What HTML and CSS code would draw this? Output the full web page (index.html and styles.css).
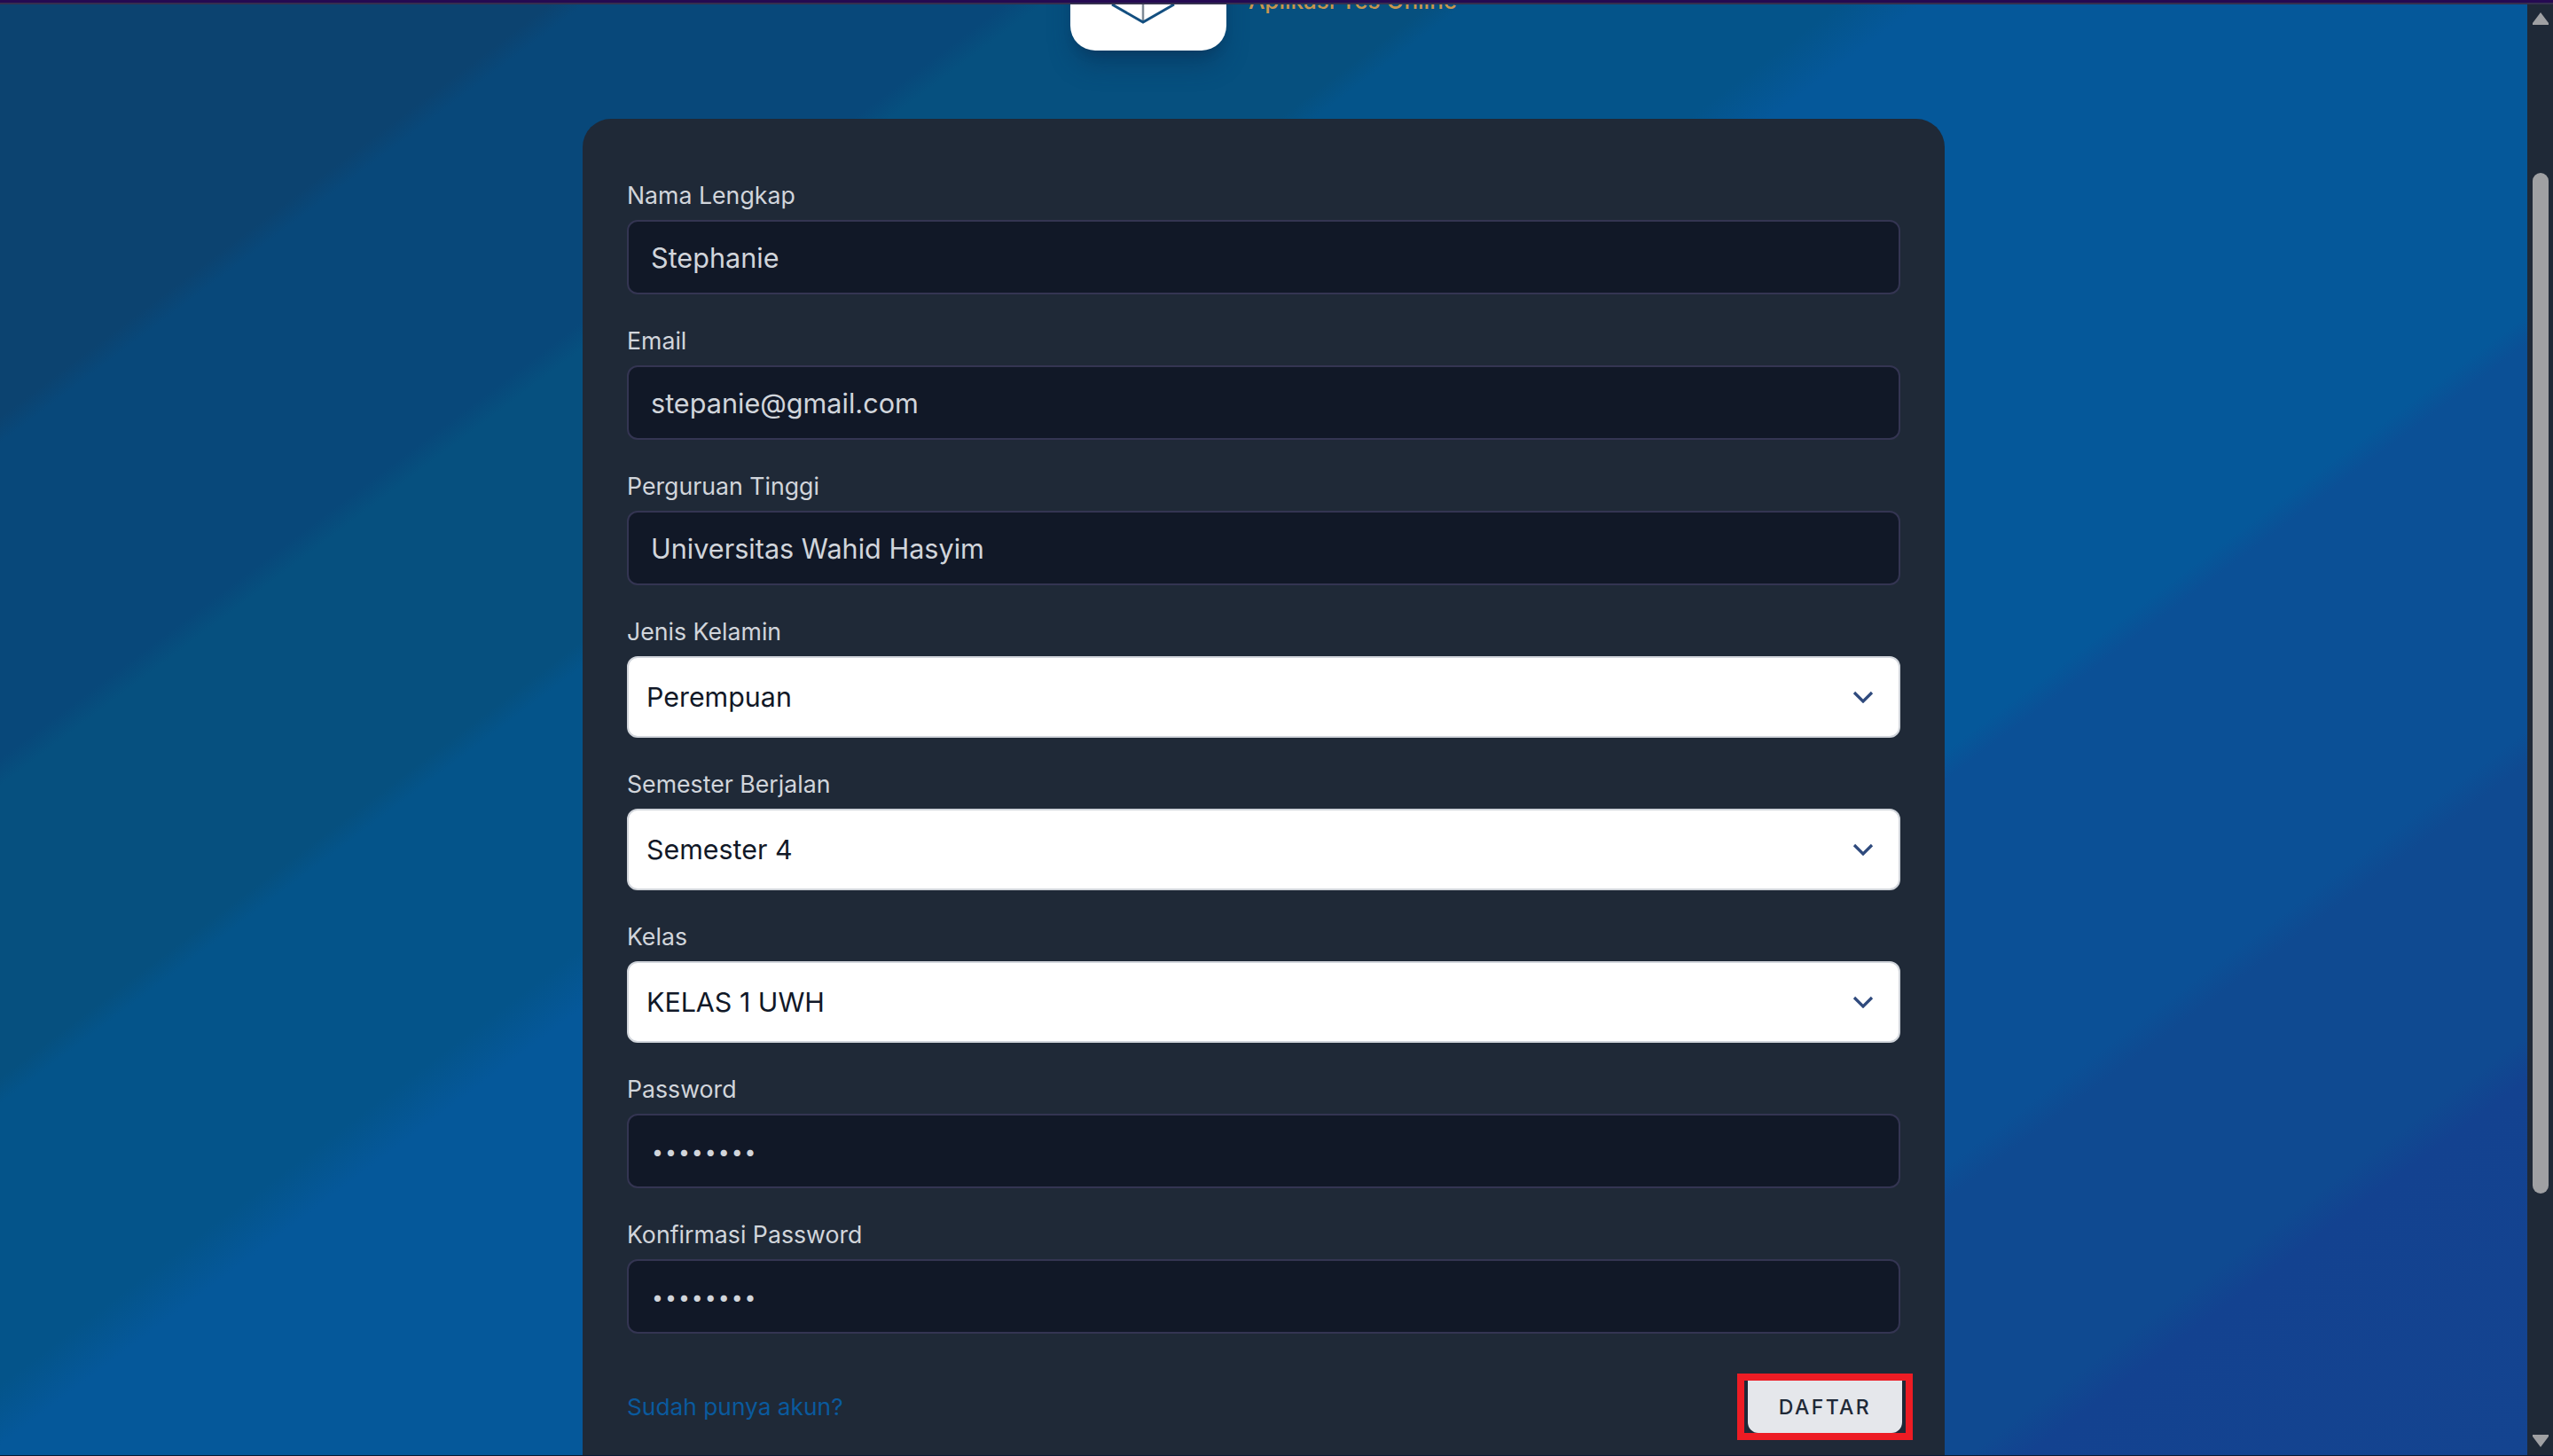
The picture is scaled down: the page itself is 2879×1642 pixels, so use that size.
FILE: index.html
```html
<!DOCTYPE html>
<html lang="id">
<head>
<meta charset="utf-8">
<title>Aplikasi Tes Online</title>
<link rel="stylesheet" href="styles.css">
</head>
<body>
<div class="topbar"></div>
<div class="window">
  <main class="main">
    <header class="brand">
      <div class="logo">
        <svg class="logo-icon" viewBox="0 0 176 176" width="176" height="176">
          <path class="logo-stem" d="M82 90 L82 144"/>
          <path class="logo-line" d="M47 124 L82 144 L117 124"/>
        </svg>
      </div>
      <div class="brand-name">Aplikasi Tes Online</div>
    </header>
    <form class="card">
      <div class="field"><label class="label">Nama Lengkap</label><div class="input">Stephanie</div></div>
      <div class="field"><label class="label">Email</label><div class="input">stepanie@gmail.com</div></div>
      <div class="field"><label class="label">Perguruan Tinggi</label><div class="input">Universitas Wahid Hasyim</div></div>
      <div class="field"><label class="label">Jenis Kelamin</label>
        <div class="select"><span>Perempuan</span>
          <svg class="chevron" viewBox="0 0 24 14" width="24" height="14"><path d="M2 2 L12 12 L22 2"/></svg></div></div>
      <div class="field"><label class="label">Semester Berjalan</label>
        <div class="select"><span>Semester 4</span>
          <svg class="chevron" viewBox="0 0 24 14" width="24" height="14"><path d="M2 2 L12 12 L22 2"/></svg></div></div>
      <div class="field"><label class="label">Kelas</label>
        <div class="select"><span>KELAS 1 UWH</span>
          <svg class="chevron" viewBox="0 0 24 14" width="24" height="14"><path d="M2 2 L12 12 L22 2"/></svg></div></div>
      <div class="field"><label class="label">Password</label><div class="input input-pass"><span class="dots">••••••••</span></div></div>
      <div class="field"><label class="label">Konfirmasi Password</label><div class="input input-pass"><span class="dots">••••••••</span></div></div>
      <div class="actions">
        <a class="link">Sudah punya akun?</a>
        <div class="highlight"><button class="button" type="button">DAFTAR</button></div>
      </div>
    </form>
  </main>
  <aside class="scrollbar">
    <svg class="arrow" viewBox="0 0 18 14" width="18" height="14"><path d="M9 0 L18 12 L18 14 L0 14 L0 12 Z"/></svg>
    <div class="thumb"></div>
    <svg class="arrow arrow-down" viewBox="0 0 18 14" width="18" height="14"><path d="M0 0 L18 0 L18 2 L9 14 L0 2 Z"/></svg>
  </aside>
</div>
<div class="bottomline"></div>
</body>
</html>
```
FILE: styles.css
```css
* { box-sizing: border-box; }
html, body { margin: 0; height: 100%; overflow: hidden; }
body {
  display: flex;
  flex-direction: column;
  font-family: Inter, "Noto Sans", sans-serif;
  background: #1f2937;
}
.topbar {
  flex: none;
  height: 5px;
  background: #250a52;
  border-bottom: 2px solid #35304f;
}
.bottomline { flex: none; height: 1px; background: #0c1a33; }
.window { flex: 1; display: flex; min-height: 0; }
.main {
  flex: 1;
  min-width: 0;
  overflow: hidden;
  display: flex;
  flex-direction: column;
  align-items: center;
  background: linear-gradient(143.13deg,
    #0c4370 0, #0c4370 372px, #08487a 396px,
    #08487a 680px, #06507f 705px,
    #06507f 968px, #04548a 992px,
    #04548a 1245px, #05589a 1300px,
    #05589a 1990px, #0b5096 2016px,
    #0b5096 2365px, #0f4a91 2395px,
    #0f4a91 2640px, #134290 2680px,
    #144490 100%);
}
.brand {
  flex: none;
  height: 52px;
  width: 100%;
  display: flex;
  justify-content: center;
  align-items: flex-end;
  gap: 25px;
}
.logo {
  flex: none;
  width: 176px;
  height: 176px;
  background: #fff;
  border-radius: 28px;
  box-shadow: 0 20px 30px -6px rgba(12, 45, 80, .45), 0 8px 12px -6px rgba(12, 45, 80, .4);
}
.logo-icon { display: block; }
.logo-line { fill: none; stroke: #134f80; stroke-width: 3; }
.logo-stem { fill: none; stroke: #7f8a96; stroke-width: 2.5; }
.brand-name {
  font-size: 26px;
  line-height: 40px;
  font-weight: 500;
  color: #c8964f;
  white-space: nowrap;
  margin-bottom: 36px;
}
.card {
  flex: none;
  width: 1536px;
  margin-top: 77px;
  padding: 66px 50px 60px;
  background: #1f2937;
  border-radius: 32px 32px 0 0;
  display: flex;
  flex-direction: column;
  gap: 32px;
}
.field { display: flex; flex-direction: column; }
.label {
  font-size: 26.7px;
  line-height: 40px;
  color: #d1d5db;
  margin-bottom: 8px;
}
.input {
  height: 84px;
  padding: 0 25px;
  display: flex;
  align-items: center;
  font-size: 30.6px;
  color: #d1d5db;
  background: #111827;
  border: 2px solid #343552;
  border-radius: 12px;
}
.dots {
  font-size: 23px;
  letter-spacing: 2px;
  line-height: 1;
  padding-top: 2px;
  padding-left: 1px;
}
.select {
  height: 92px;
  padding: 0 24px 0 20px;
  display: flex;
  align-items: center;
  justify-content: space-between;
  font-size: 30.4px;
  color: #111827;
  background: #fff;
  border: 2px solid #d1d5db;
  border-radius: 12px;
}
.chevron { margin-right: 4px; }
.chevron path { fill: none; stroke: #2f4a7d; stroke-width: 3.2; }
.actions {
  display: flex;
  align-items: center;
  justify-content: space-between;
  margin-top: 13px;
}
.link { font-size: 26.3px; line-height: 40px; color: #0a5a9e; }
.highlight {
  flex: none;
  display: flex;
  width: 198px;
  height: 75px;
  margin-right: -14px;
  padding: 0 4px;
  border: 8px solid #ed1c24;
}
.button {
  flex: 1;
  margin: 0;
  padding: 0;
  border: 0;
  border-radius: 0 0 12px 12px;
  background: #e5e7eb;
  color: #1f2937;
  font-family: inherit;
  font-size: 23px;
  font-weight: 500;
  letter-spacing: 2.4px;
}
.scrollbar {
  flex: none;
  width: 29px;
  padding: 9px 5px 9px 6px;
  display: flex;
  flex-direction: column;
  background: #1f2937;
}
.arrow { flex: none; display: block; fill: #9fa0a3; }
.thumb {
  flex: none;
  height: 1151px;
  margin-top: 167px;
  background: #9fa0a3;
  border-radius: 9px;
}
.arrow-down { margin-top: auto; }
```
